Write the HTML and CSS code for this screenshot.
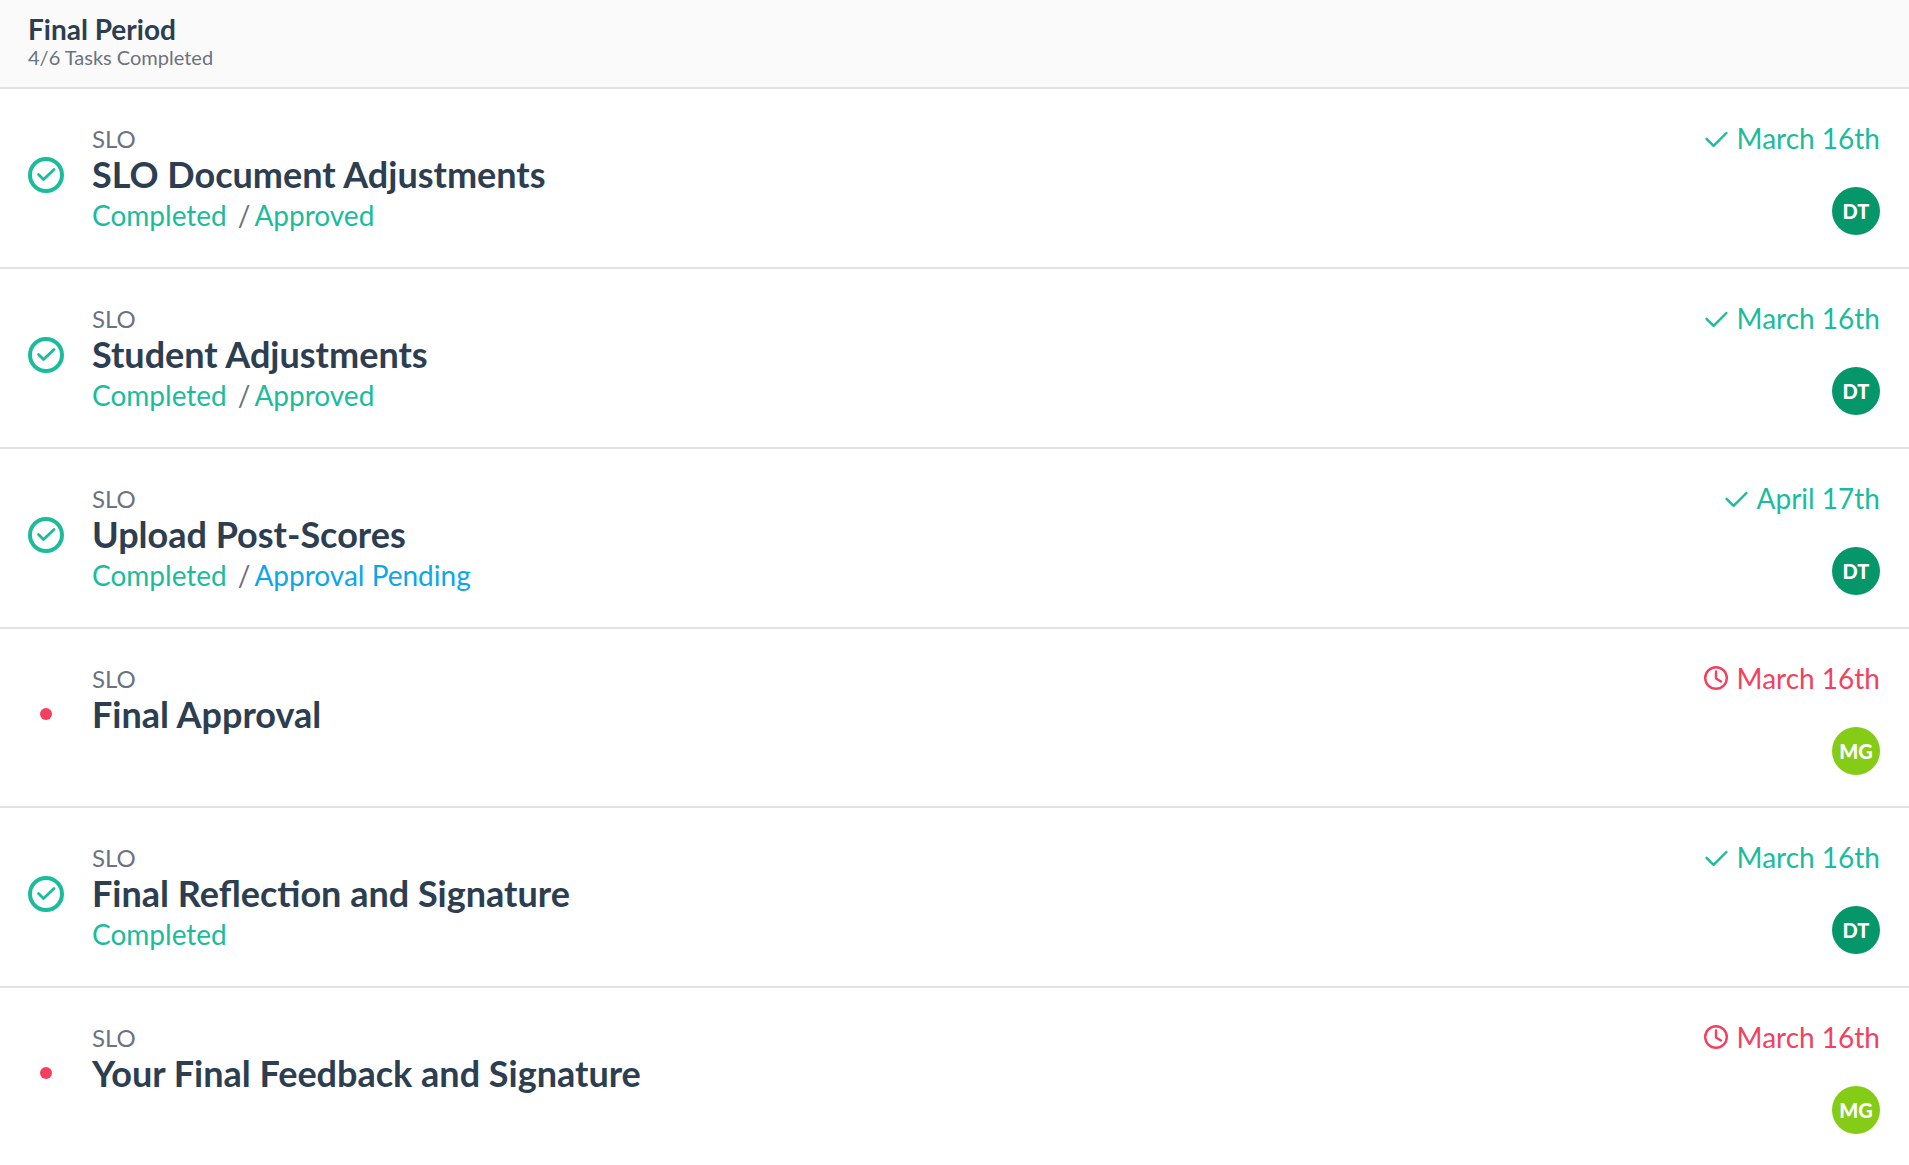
FILE: index.html
```
<!DOCTYPE html>
<html lang="en">

<head>
    <meta charset="utf-8">
    <meta name="viewport" content="width=device-width, initial-scale=1">
    <title>Final Period</title>
    <link rel="stylesheet" href="styles.css">
</head>

<body>
    <!-- shared icons -->
    <svg class="sprite" aria-hidden="true">
        <symbol id="done" viewBox="0 0 36 36">
            <circle cx="18" cy="18" r="16" stroke-width="4" />
            <path d="M10.5 17.5l5 5L26 12.5" stroke-width="2.8" />
        </symbol>
        <symbol id="check" viewBox="0 0 24 24">
            <path d="M2.6 12.8l7 7L22.4 7" stroke-width="2.4" />
        </symbol>
        <symbol id="clock" viewBox="0 0 24 24">
            <circle cx="12" cy="12" r="10.8" stroke-width="2.4" />
            <path d="M12 5.5V12.5l5 3" stroke-width="2.4" />
        </symbol>
    </svg>

    <header class="period">
        <h1 class="period-title">Final Period</h1>
        <p class="period-progress">4/6 Tasks Completed</p>
    </header>

    <main class="tasks">
        <section class="task">
            <div class="marker"><svg class="icon"><use href="#done" /></svg></div>
            <div class="info">
                <p class="type">SLO</p>
                <h2 class="title">SLO Document Adjustments</h2>
                <p class="status"><span class="completed">Completed</span><span class="slash">/</span><span class="completed">Approved</span></p>
            </div>
            <div class="side">
                <div class="date completed"><svg class="icon"><use href="#check" /></svg>March 16th</div>
                <div class="avatar">DT</div>
            </div>
        </section>

        <section class="task">
            <div class="marker"><svg class="icon"><use href="#done" /></svg></div>
            <div class="info">
                <p class="type">SLO</p>
                <h2 class="title">Student Adjustments</h2>
                <p class="status"><span class="completed">Completed</span><span class="slash">/</span><span class="completed">Approved</span></p>
            </div>
            <div class="side">
                <div class="date completed"><svg class="icon"><use href="#check" /></svg>March 16th</div>
                <div class="avatar">DT</div>
            </div>
        </section>

        <section class="task">
            <div class="marker"><svg class="icon"><use href="#done" /></svg></div>
            <div class="info">
                <p class="type">SLO</p>
                <h2 class="title">Upload Post-Scores</h2>
                <p class="status"><span class="completed">Completed</span><span class="slash">/</span><span class="pending">Approval Pending</span></p>
            </div>
            <div class="side">
                <div class="date completed"><svg class="icon"><use href="#check" /></svg>April 17th</div>
                <div class="avatar">DT</div>
            </div>
        </section>

        <section class="task">
            <div class="marker open"><span class="dot"></span></div>
            <div class="info">
                <p class="type">SLO</p>
                <h2 class="title">Final Approval</h2>
            </div>
            <div class="side">
                <div class="date late"><svg class="icon"><use href="#clock" /></svg>March 16th</div>
                <div class="avatar lime">MG</div>
            </div>
        </section>

        <section class="task">
            <div class="marker"><svg class="icon"><use href="#done" /></svg></div>
            <div class="info">
                <p class="type">SLO</p>
                <h2 class="title">Final Reflection and Signature</h2>
                <p class="status"><span class="completed">Completed</span></p>
            </div>
            <div class="side">
                <div class="date completed"><svg class="icon"><use href="#check" /></svg>March 16th</div>
                <div class="avatar">DT</div>
            </div>
        </section>

        <section class="task">
            <div class="marker open"><span class="dot"></span></div>
            <div class="info">
                <p class="type">SLO</p>
                <h2 class="title">Your Final Feedback and Signature</h2>
            </div>
            <div class="side">
                <div class="date late"><svg class="icon"><use href="#clock" /></svg>March 16th</div>
                <div class="avatar lime">MG</div>
            </div>
        </section>
    </main>
</body>

</html>
```

FILE: styles.css
```
* {
    box-sizing: border-box;
}

body {
    margin: 0;
    background-color: #ffffff;
    color: #6b7280;
    font-family: Lato, sans-serif;
}

h1,
h2,
p {
    margin: 0;
}

.sprite {
    display: none;
}

.period {
    padding: 12px 28px 19px;
    background-color: #fafafa;
    border-bottom: 2px solid #e2e2e2;
}

.period-title {
    color: #2c3e50;
    font-size: 28px;
    line-height: 34px;
}

.period-progress {
    font-size: 20px;
    line-height: 22px;
}

.task {
    display: flex;
    align-items: flex-start;
    min-height: 179px;
    padding: 0 29px 0 28px;
    border-bottom: 2px solid #e2e2e2;
}

.task:last-child {
    border-bottom: none;
}

.marker {
    display: flex;
    align-items: center;
    justify-content: center;
    width: 36px;
    height: 36px;
    margin-top: 68px;
    color: #1abc9c;
}

.marker .icon {
    width: 36px;
    height: 36px;
}

.marker.open {
    height: 34px;
}

.icon {
    fill: none;
    stroke: currentColor;
    stroke-linecap: round;
    stroke-linejoin: round;
}

.dot {
    width: 12px;
    height: 12px;
    border-radius: 50%;
    background-color: #f43f5e;
}

.info {
    flex: 1;
    padding: 35px 28px 31px;
}

.type {
    font-size: 24px;
    line-height: 30px;
}

.title {
    color: #2c3e50;
    font-size: 36px;
    line-height: 40px;
}

.status {
    font-size: 28px;
    line-height: 42px;
}

.slash {
    margin: 0 4px 0 11px;
}

.completed {
    color: #1abc9c;
}

.pending {
    color: #0ea5e9;
}

.late {
    color: #f43f5e;
}

.side {
    display: flex;
    flex-direction: column;
    align-items: flex-end;
    gap: 28px;
    padding-top: 28px;
}

.date {
    display: flex;
    align-items: center;
    gap: 9px;
    font-size: 28px;
    line-height: 42px;
}

.date .icon {
    width: 24px;
    height: 24px;
}

.avatar {
    width: 48px;
    height: 48px;
    border-radius: 50%;
    background-color: #059669;
    color: #ffffff;
    font-size: 20px;
    font-weight: 900;
    line-height: 48px;
    text-align: center;
}

.lime {
    background-color: #84cc16;
}
```
